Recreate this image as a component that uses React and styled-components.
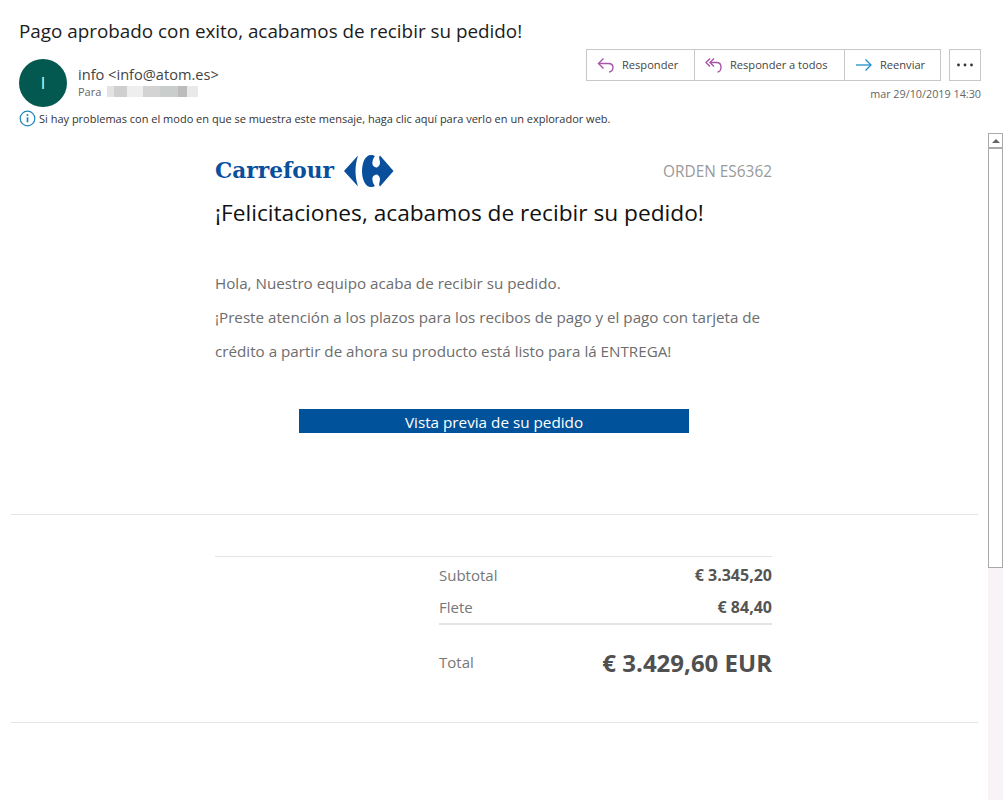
import styled, { createGlobalStyle } from "styled-components";

const GlobalStyle = createGlobalStyle`
  html, body {
    margin: 0;
    padding: 0;
    background: #fff;
  }
  body {
    font-family: "Open Sans", "Noto Sans", sans-serif;
    color: #333;
    overflow: hidden;
  }
`;

const Page = styled.div`
  width: 1003px;
  height: 800px;
  display: flex;
  flex-direction: column;
  overflow: hidden;
`;

const Header = styled.header`
  padding: 18px 22px 0 19px;
  height: 133px;
  box-sizing: border-box;
  flex: none;
`;

const Subject = styled.h1`
  margin: 0;
  font-size: 18.85px;
  line-height: 26px;
  font-weight: 400;
  color: #1c1c1c;
`;

const MetaRow = styled.div`
  display: flex;
  justify-content: space-between;
  margin-top: 5px;
`;

const Sender = styled.div`
  display: flex;
  gap: 11px;
  padding-top: 10px;
`;

const Avatar = styled.div`
  width: 48px;
  height: 48px;
  border-radius: 50%;
  background: #03594f;
  color: #dfe;
  font-size: 16px;
  display: flex;
  align-items: center;
  justify-content: center;
`;

const SenderText = styled.div`
  padding-top: 6px;
`;

const From = styled.div`
  font-size: 14.6px;
  line-height: 18px;
  color: #444;
`;

const Recipient = styled.div`
  display: flex;
  align-items: center;
  gap: 6px;
  font-size: 11px;
  line-height: 17px;
  color: #666;
`;

const BlurredName = styled.span`
  display: block;
  width: 91px;
  height: 11px;
  background: linear-gradient(
    90deg,
    #e3e3e3 0 8%,
    #cfcfcf 8% 22%,
    #eee 22% 40%,
    #d3d3d3 40% 58%,
    #c9cdcb 58% 78%,
    #bcbcbc 78% 88%,
    #e9e9e9 88% 100%
  );
`;

const ActionColumn = styled.div`
  display: flex;
  flex-direction: column;
  align-items: flex-end;
`;

const Actions = styled.div`
  display: flex;
  gap: 8px;
`;

const ButtonGroup = styled.div`
  display: flex;
  height: 32px;
  box-sizing: border-box;
  border: 1px solid #c8c8c8;
`;

const ActionButton = styled.button`
  display: flex;
  align-items: center;
  gap: 7px;
  width: ${(p) => p.$width}px;
  height: 100%;
  padding: 0 0 1px 10px;
  box-sizing: border-box;
  background: #fff;
  border: 0;
  border-left: ${(p) => (p.$first ? "0" : "1px solid #c8c8c8")};
  font: inherit;
  font-size: 11.1px;
  color: #444;
`;

const MoreButton = styled.button`
  width: 32px;
  height: 32px;
  box-sizing: border-box;
  background: #fff;
  border: 1px solid #c8c8c8;
  padding: 0;
  display: flex;
  align-items: center;
  justify-content: center;
`;

const DateText = styled.div`
  margin-top: 5px;
  font-size: 10.8px;
  line-height: 15px;
  color: #666;
`;

const Notice = styled.div`
  display: flex;
  align-items: center;
  gap: 3px;
  margin-top: 3px;
  font-size: 11px;
  line-height: 16px;
  color: #333;
`;

const Body = styled.div`
  flex: 1;
  display: flex;
  min-height: 0;
`;

const Content = styled.main`
  flex: 1;
  padding: 0 10px 0 11px;
`;

const Scrollbar = styled.div`
  width: 15px;
  flex: none;
  display: flex;
  flex-direction: column;
  background: #f7f3f7;
`;

const ScrollUp = styled.div`
  height: 16px;
  box-sizing: border-box;
  background: #fff;
  border: 1px solid #aaa;
  border-bottom-width: 2px;
  display: flex;
  align-items: center;
  justify-content: center;
  &::before {
    content: "";
    border-left: 4px solid transparent;
    border-right: 4px solid transparent;
    border-bottom: 4px solid #666;
  }
`;

const ScrollThumb = styled.div`
  height: 419px;
  box-sizing: border-box;
  background: #fff;
  border: 1px solid #aaa;
  border-top: 0;
`;

const Column = styled.div`
  width: 557px;
  margin-left: 204px;
`;

const Hero = styled.section`
  height: 382px;
  box-sizing: border-box;
  padding-top: 20px;
  border-bottom: 1px solid #e4e4e4;
`;

const BrandRow = styled.div`
  display: flex;
  align-items: center;
  justify-content: space-between;
  height: 36px;
`;

const Brand = styled.div`
  display: flex;
  align-items: center;
  gap: 10px;
`;

const BrandName = styled.span`
  font-family: "DejaVu Serif", "Liberation Serif", serif;
  font-weight: 700;
  font-size: 21.7px;
  line-height: 36px;
  color: #0a4f9c;
`;

const OrderNo = styled.span`
  font-size: 15.4px;
  color: #9a9a9a;
`;

const Heading = styled.h2`
  margin: 8px 0 0;
  font-size: 22.7px;
  line-height: 32px;
  font-weight: 400;
  color: #111;
`;

const Message = styled.p`
  margin: 37px 0 0;
  font-size: 15.2px;
  line-height: 34px;
  color: #6d6d6d;
`;

const PreviewButton = styled.a`
  display: block;
  width: 390px;
  height: 24px;
  margin: 41px 0 0 84px;
  background: #00539b;
  color: #fff;
  font-size: 15.25px;
  line-height: 27px;
  text-align: center;
`;

const Summary = styled.section`
  height: 208px;
  box-sizing: border-box;
  padding-top: 41px;
  border-bottom: 1px solid #e4e4e4;
`;

const Totals = styled.div`
  border-top: 1px solid #e4e4e4;
  padding-left: 224px;
`;

const Row = styled.div`
  display: flex;
  align-items: center;
  justify-content: space-between;
  height: 32px;
  font-size: 15px;
  color: #777;
`;

const FirstRows = styled.div`
  padding-top: 2px;
  border-bottom: 2px solid #e4e4e4;
`;

const Amount = styled.strong`
  font-size: 16px;
  font-weight: 700;
  color: #555;
`;

const TotalRow = styled(Row)`
  height: 74px;
`;

const TotalAmount = styled.strong`
  font-size: 24px;
  font-weight: 700;
  color: #505050;
`;

function ReplyIcon() {
  return (
    <svg width="18" height="18" viewBox="0 0 18 18" fill="none" stroke="#a855a8" strokeWidth="1.4">
      <path d="M6.500 2.500 1.500 7.500l5 5" />
      <path d="M1.500 7.500h10c3 0 4.500 2 4.500 4.300S14 16 12 16" />
    </svg>
  );
}

function ReplyAllIcon() {
  return (
    <svg width="18" height="18" viewBox="0 0 18 18" fill="none" stroke="#a855a8" strokeWidth="1.4">
      <path d="M5 2.500 1 6.500l4 4" />
      <path d="M9 2.500 5 6.500l4 4" />
      <path d="M5 6.500h6.500c3 0 4.500 2.300 4.500 4.700S14.500 16 12.500 16" />
    </svg>
  );
}

function ForwardIcon() {
  return (
    <svg width="18" height="18" viewBox="0 0 18 18" fill="none" stroke="#1f8fc9" strokeWidth="1.3">
      <path d="M1 9h15" />
      <path d="M10.500 3.500 16 9l-5.500 5.500" />
    </svg>
  );
}

function MoreIcon() {
  return (
    <svg width="18" height="4" viewBox="0 0 18 4" fill="#333">
      <circle cx="2.500" cy="2" r="1.400" />
      <circle cx="9" cy="2" r="1.400" />
      <circle cx="15.500" cy="2" r="1.400" />
    </svg>
  );
}

function InfoIcon() {
  return (
    <svg width="17" height="17" viewBox="0 0 17 17" fill="none">
      <circle cx="8.500" cy="8.500" r="7.300" stroke="#1f86bd" strokeWidth="1.200" />
      <circle cx="8.500" cy="5" r="1" fill="#1f86bd" />
      <path d="M8.500 7.300v5" stroke="#1f86bd" strokeWidth="1.700" />
    </svg>
  );
}

function CarrefourMark() {
  return (
    <svg width="50" height="32" viewBox="0 0 50 32" fill="#0a4f9c">
      <path d="M14 .5 0 16l14 15.500c-1.500-5-2.500-10-2.500-15.500S12.500 5.500 14 .5Z" />
      <path d="M27 0C21 0 18 8 18 16s3 16 9 16c1.500 0 3-.5 4-1-3-4-3.500-9-1-10.500 1-.8 2-1 3-1 3 1.500 3.500 4.500 2.500 7.500-.5 2-.5 3.500.5 4.500L49.500 16 36 .5c-1 1-1 2.500-.5 4.500 1 3 .5 6-2.500 7.500-1 0-2-.2-3-1C27.500 10 28 5 31 1c-1-.5-2.500-1-4-1Z" />
    </svg>
  );
}

export default function App() {
  return (
    <Page>
      <GlobalStyle />
      <Header>
        <Subject>Pago aprobado con exito, acabamos de recibir su pedido!</Subject>
        <MetaRow>
          <Sender>
            <Avatar>I</Avatar>
            <SenderText>
              <From>info &lt;info@atom.es&gt;</From>
              <Recipient>
                Para <BlurredName />
              </Recipient>
            </SenderText>
          </Sender>
          <ActionColumn>
            <Actions>
              <ButtonGroup>
                <ActionButton $first $width={107}>
                  <ReplyIcon /> Responder
                </ActionButton>
                <ActionButton $width={150}>
                  <ReplyAllIcon /> Responder a todos
                </ActionButton>
                <ActionButton $width={96}>
                  <ForwardIcon /> Reenviar
                </ActionButton>
              </ButtonGroup>
              <MoreButton aria-label="Más">
                <MoreIcon />
              </MoreButton>
            </Actions>
            <DateText>mar 29/10/2019 14:30</DateText>
          </ActionColumn>
        </MetaRow>
        <Notice>
          <InfoIcon />
          Si hay problemas con el modo en que se muestra este mensaje, haga clic aquí para verlo en un explorador web.
        </Notice>
      </Header>
      <Body>
        <Content>
          <Hero>
            <Column>
              <BrandRow>
                <Brand>
                  <BrandName>Carrefour</BrandName>
                  <CarrefourMark />
                </Brand>
                <OrderNo>ORDEN ES6362</OrderNo>
              </BrandRow>
              <Heading>¡Felicitaciones, acabamos de recibir su pedido!</Heading>
              <Message>
                Hola, Nuestro equipo acaba de recibir su pedido.
                <br />
                ¡Preste atención a los plazos para los recibos de pago y el pago con tarjeta de crédito a partir de ahora su producto está listo para lá ENTREGA!
              </Message>
              <PreviewButton>Vista previa de su pedido</PreviewButton>
            </Column>
          </Hero>
          <Summary>
            <Column>
              <Totals>
                <FirstRows>
                  <Row>
                    Subtotal <Amount>€ 3.345,20</Amount>
                  </Row>
                  <Row>
                    Flete <Amount>€ 84,40</Amount>
                  </Row>
                </FirstRows>
                <TotalRow>
                  Total <TotalAmount>€ 3.429,60 EUR</TotalAmount>
                </TotalRow>
              </Totals>
            </Column>
          </Summary>
        </Content>
        <Scrollbar>
          <ScrollUp />
          <ScrollThumb />
        </Scrollbar>
      </Body>
    </Page>
  );
}
